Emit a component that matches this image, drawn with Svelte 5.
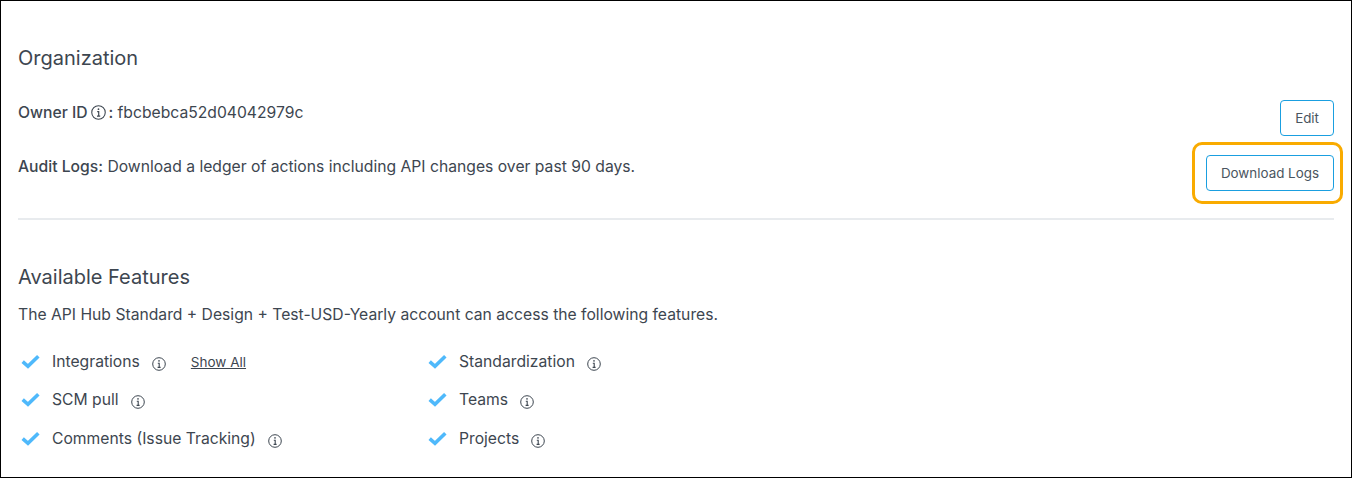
<script>
	const features = [
		[
			{ name: 'Integrations', showAll: true },
			{ name: 'SCM pull' },
			{ name: 'Comments (Issue Tracking)' }
		],
		[{ name: 'Standardization' }, { name: 'Teams' }, { name: 'Projects' }]
	];
</script>

{#snippet info(size)}
	<svg class="info" width={size} height={size} viewBox="0 0 14 14" fill="none" stroke="#3d4650">
		<circle cx="7" cy="7" r="6.3" stroke-width="1" />
		<path d="M5.8 6.2H7.2V10.2M5.6 10.4H8.6" stroke-width="1.1" />
		<circle cx="7" cy="3.9" r="0.8" fill="#3d4650" stroke="none" />
	</svg>
{/snippet}

<div class="page">
	<section class="org">
		<h2>Organization</h2>
		<div class="rows">
			<div class="row owner">
				<p>
					<b>Owner ID</b>
					{@render info(15)}
					<b>:</b> fbcbebca52d04042979c
				</p>
				<button>Edit</button>
			</div>
			<div class="row audit">
				<p><b>Audit Logs:</b> Download a ledger of actions including API changes over past 90 days.</p>
				<div class="highlight"><button>Download Logs</button></div>
			</div>
		</div>
	</section>

	<hr />

	<section class="avail">
		<h2>Available Features</h2>
		<p class="lead">The API Hub Standard + Design + Test-USD-Yearly account can access the following features.</p>
		<div class="cols">
			{#each features as col}
				<ul>
					{#each col as f}
						<li>
							<svg class="check" width="19" height="15" viewBox="0 0 18 14">
								<path d="M1.6 7.2L6.6 11.6L16.4 2" fill="none" stroke="#4fb9fb" stroke-width="3.4" />
							</svg>
							<span class="name">{f.name}</span>
							{@render info(14)}
							{#if f.showAll}<a href="#top">Show All</a>{/if}
						</li>
					{/each}
				</ul>
			{/each}
		</div>
	</section>
</div>

<style>
	:global(body) {
		font-family: Inter, 'Liberation Sans', sans-serif;
		color: #3d4650;
	}
	.page {
		box-sizing: border-box;
		height: 478px;
		border: 1px solid #000;
		padding: 45px 17px 0 17px;
	}
	h2 {
		margin: 0;
		font-size: 20px;
		font-weight: 400;
		line-height: 24px;
	}
	p {
		margin: 0;
		font-size: 15.7px;
		line-height: 20px;
	}
	b {
		font-weight: 500;
	}
	.rows {
		margin-top: 30px;
	}
	.row {
		display: flex;
		justify-content: space-between;
		align-items: flex-start;
	}
	.owner p {
		padding-top: 3px;
	}
	.owner .info {
		margin: 0 -2px 0 -1px;
	}
	.audit {
		margin-top: 19px;
	}
	.audit p {
		margin-top: 2px;
	}
	.info {
		vertical-align: -2px;
	}
	button {
		box-sizing: border-box;
		height: 36px;
		padding: 0 14px;
		font: 400 13.4px Inter, 'Liberation Sans', sans-serif;
		color: #4a5560;
		background: #fff;
		border: 1px solid #1a9fe0;
		border-radius: 4px;
	}
	.highlight {
		position: relative;
		display: flex;
	}
	.highlight::after {
		content: '';
		position: absolute;
		top: -13px;
		right: -9px;
		bottom: -13px;
		left: -14px;
		border: 3px solid #f9ab00;
		border-radius: 10px;
		pointer-events: none;
	}
	hr {
		margin: 27px 0 0;
		border: 0;
		border-top: 2px solid #e8ebee;
	}
	.avail {
		margin-top: 45px;
	}
	.lead {
		margin-top: 16px;
	}
	.cols {
		display: flex;
		margin-top: 17px;
	}
	ul {
		list-style: none;
		margin: 0;
		padding: 0;
		width: 407px;
	}
	li {
		display: flex;
		align-items: center;
		height: 38.5px;
		font-size: 15.7px;
	}
	.check {
		margin: 0 12px 0 3px;
		flex: none;
	}
	li .info {
		margin-left: 12px;
		margin-top: 5px;
	}
	a {
		margin-left: 25px;
		font-size: 13.5px;
		font-weight: 400;
		color: #3d4650;
		text-decoration: underline;
		margin-top: 1px;
	}
</style>
